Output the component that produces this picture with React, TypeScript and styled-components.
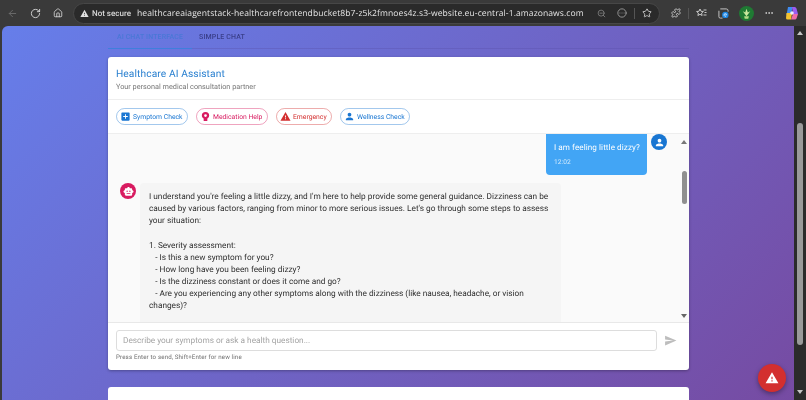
import React from "react";
import styled, { createGlobalStyle } from "styled-components";
import { ArrowLeft, RotateCw, Home, ZoomOut, Star, Puzzle, Ellipsis, CircleEllipsis } from "lucide-react";

const Global = createGlobalStyle`
  html, body { margin: 0; padding: 0; background: #3b3b3b; overflow: hidden; }
  * { box-sizing: border-box; }
  body { font-family: Roboto, "Liberation Sans", sans-serif; text-rendering: geometricPrecision; }
`;
const Shell = styled.div`width: 806px; height: 400px; display: flex; flex-direction: column; overflow: hidden; background: #3a3a3a; filter: blur(0.3px);`;
const Toolbar = styled.header`height: 26px; flex: none; display: flex; align-items: center; padding: 0 0 0 5px; color: #d6d6d6; background: #3a3a3a;`;
const Slot = styled.span<{ $dim?: boolean; $w: number }>`width: ${p => p.$w}px; height: 20px; flex: none; display: flex; align-items: center; justify-content: center; color: ${p => p.$dim ? "#6c6c6c" : "#d8d8d8"};`;
const Address = styled.div`margin: 0 8px; width: 587px; height: 21px; border-radius: 11px; background: #2a2a2a; border: 1px solid #474747; flex: none; display: flex; align-items: center; padding: 0 0 0 6px;`;
const Secure = styled.span`font: 500 8px Roboto, sans-serif; color: #d8d8d8; display: flex; align-items: center; gap: 3px; width: 57px; flex: none; white-space: nowrap;`;
const Url = styled.span`font: 400 8.55px "Open Sans", sans-serif; color: #e4e4e4; white-space: nowrap; flex: 1; letter-spacing: 0.01em;`;
const Sep = styled.span`width: 1px; height: 11px; background: #555; flex: none;`;
const Viewport = styled.div`flex: 1; min-height: 0; display: flex; padding-left: 2px;`;
const Page = styled.main`flex: 1; min-width: 0; overflow: hidden; border-top-left-radius: 6px; background: linear-gradient(135deg, #667eea 0%, #764ba2 100%); display: flex; flex-direction: column; align-items: center; position: relative; padding-left: 1px;`;
const Column = styled.div`width: 581px; flex: none; display: flex; flex-direction: column;`;
const Tabs = styled.nav`height: 23px; flex: none; display: flex; border-bottom: 1px solid rgba(90, 80, 170, .35); margin-bottom: 8px;`;
const Tab = styled.span<{ $active?: boolean }>`width: ${p => p.$active ? 84 : 60}px; display: flex; align-items: center; justify-content: center; padding-bottom: 1px; font: 500 7px Roboto, sans-serif; letter-spacing: .02em; color: ${p => p.$active ? "#4a78d6" : "#3a3f8a"}; margin-bottom: -1px; border-bottom: ${p => p.$active ? "1.5px solid #3f7fdc" : "none"};`;
const Card = styled.section`height: 313px; flex: none; background: #fff; border-radius: 3px; box-shadow: 0 1px 3px rgba(0,0,0,.3); display: flex; flex-direction: column; overflow: hidden;`;
const Header = styled.div`height: 43px; flex: none; padding: 11px 8px 0; border-bottom: 1px solid #eee;`;
const Title = styled.h1`margin: 0; font: 400 10.2px/13px Roboto, sans-serif; letter-spacing: .01em; color: #2a80d0;`;
const Sub = styled.p`margin: 1px 0 0; font: 400 7.3px/9px Roboto, sans-serif; color: #767676;`;
const Chips = styled.div`height: 33px; flex: none; display: flex; align-items: center; gap: 8px; padding: 0 8px;`;
const Chip = styled.span<{ $c: string; $w: number }>`width: ${p => p.$w}px; height: 17px; flex: none; border-radius: 9px; border: 1px solid ${p => p.$c}66; color: ${p => p.$c}; display: flex; align-items: center; gap: 2px; padding-left: 3px; font: 400 6.8px Roboto, sans-serif; white-space: nowrap;`;
const Messages = styled.div`height: 190px; flex: none; background: #fafafa; border-top: 1px solid #eee; border-bottom: 1px solid #e8e8e8; display: flex; overflow: hidden;`;
const MsgList = styled.div`flex: 1; min-width: 0; display: flex; flex-direction: column; padding-right: 12px;`;
const UserRow = styled.div`display: flex; justify-content: flex-end; gap: 4px; flex: none;`;
const UserBubble = styled.div`width: 101px; height: 41px; background: #42a5f5; color: #fff; border-radius: 0 0 4px 4px; padding: 7px 8px 0 8px; font: 400 8.1px/12px Roboto, sans-serif; letter-spacing: .01em; white-space: nowrap;`;
const Time = styled.div`font: 400 6.6px/8px Roboto, sans-serif; margin-top: 5px; opacity: .75;`;
const Avatar = styled.span<{ $bg: string }>`width: 16px; height: 16px; flex: none; border-radius: 50%; background: ${p => p.$bg}; display: flex; align-items: center; justify-content: center;`;
const BotRow = styled.div`display: flex; gap: 4px; margin: 8px 0 0 12px;`;
const BotBubble = styled.div`width: 421px; height: 160px; flex: none; background: #f5f5f5; border-radius: 4px 4px 0 0; padding: 8px 9px 0; font: 400 8.27px/12.15px Roboto, sans-serif; color: #2e2e2e; white-space: pre-wrap;`;
const InnerBar = styled.div`width: 10px; flex: none; display: flex; flex-direction: column; align-items: center; padding: 6px 0 4px;`;
const Arrow = styled.span<{ $down?: boolean; $c: string }>`width: 0; height: 0; flex: none; border-left: 3.5px solid transparent; border-right: 3.5px solid transparent; ${p => p.$down ? `border-top: 4px solid ${p.$c}; margin-top: auto;` : `border-bottom: 4px solid ${p.$c};`}`;
const InnerThumb = styled.span`width: 5px; height: 33px; flex: none; margin-top: 27px; border-radius: 3px; background: #8f8f8f;`;
const InputArea = styled.div`flex: 1; padding: 7px 8px 0; display: flex; flex-direction: column;`;
const InputRow = styled.div`display: flex; align-items: center; gap: 7px;`;
const Field = styled.div`width: 541px; height: 21px; border: 1px solid #ddd; border-radius: 3px; padding-left: 6px; display: flex; align-items: center; font: 400 8.25px Roboto, sans-serif; color: #a4a4a4;`;
const Hint = styled.div`font: 400 6.2px/8px Roboto, sans-serif; margin-top: 2px; color: #707070; letter-spacing: .02em;`;
const NextCard = styled.section`height: 60px; flex: none; margin-top: 17px; background: #fff; border-radius: 3px;`;
const Fab = styled.button`position: absolute; right: 8px; bottom: 8px; width: 28px; height: 28px; border: 0; padding: 0; border-radius: 50%; background: #d32f2f; box-shadow: 0 2px 5px rgba(0,0,0,.35); display: flex; align-items: center; justify-content: center;`;
const Scrollbar = styled.aside`width: 12px; flex: none; background: #2b2b2b; display: flex; flex-direction: column; align-items: center; padding: 5px 0 6px;`;
const PageThumb = styled.span`width: 6.5px; height: 222px; flex: none; margin-top: 88px; background: #9a9a9a; border-radius: 4px;`;

const SolidIcon = ({ d, c, s = 10 }: { d: string; c: string; s?: number }) => (
  <svg width={s} height={s} viewBox="0 0 24 24" fill={c} style={{ flex: "none" }}><path d={d} /></svg>
);
const I = {
  plus: "M19 3H5c-1.1 0-2 .9-2 2v14c0 1.1.9 2 2 2h14c1.1 0 2-.9 2-2V5c0-1.1-.9-2-2-2m-2 10h-4v4h-2v-4H7v-2h4V7h2v4h4z",
  head: "M12 2a8 8 0 0 0-8 8c0 3 1.6 5.2 4 6.500V22h8v-5.500c2.400-1.300 4-3.500 4-6.500a8 8 0 0 0-8-8m0 11a3 3 0 1 1 0-6 3 3 0 0 1 0 6",
  warn: "M1 21h22L12 2zm12-3h-2v-2h2zm0-4h-2v-4h2z",
  person: "M12 12c2.210 0 4-1.790 4-4s-1.790-4-4-4-4 1.790-4 4 1.790 4 4 4m0 2c-2.670 0-8 1.340-8 4v2h16v-2c0-2.660-5.330-4-8-4",
  robot: "M20 9V7c0-1.100-.9-2-2-2h-3c0-1.660-1.340-3-3-3S9 3.340 9 5H6c-1.100 0-2 .9-2 2v2c-1.660 0-3 1.340-3 3s1.340 3 3 3v4c0 1.100.9 2 2 2h12c1.100 0 2-.9 2-2v-4c1.660 0 3-1.340 3-3s-1.340-3-3-3M7.500 11.500C7.500 10.670 8.170 10 9 10s1.500.67 1.500 1.500S9.830 13 9 13s-1.500-.67-1.500-1.500M16 17H8v-2h8zm-1-4c-.83 0-1.500-.67-1.500-1.500S14.170 10 15 10s1.500.67 1.500 1.500S15.830 13 15 13",
  send: "M2.010 21 23 12 2.010 3 2 10l15 2-15 2z",
};

const reply = `I understand you're feeling a little dizzy, and I'm here to help provide some general guidance. Dizziness can be caused by various factors, ranging from minor to more serious issues. Let's go through some steps to assess your situation:

1. Severity assessment:
   - Is this a new symptom for you?
   - How long have you been feeling dizzy?
   - Is the dizziness constant or does it come and go?
   - Are you experiencing any other symptoms along with the dizziness (like nausea, headache, or vision changes)?`;

const chips = [
  { label: "Symptom Check", c: "#1976d2", w: 72, d: I.plus },
  { label: "Medication Help", c: "#d81b60", w: 72, d: I.head },
  { label: "Emergency", c: "#d32f2f", w: 56, d: I.warn },
  { label: "Wellness Check", c: "#1976d2", w: 70, d: I.person },
];

export default function App() {
  return (
    <Shell>
      <Global />
      <Toolbar>
        <Slot $dim $w={14}><ArrowLeft size={11} /></Slot>
        <Slot $w={32}><RotateCw size={11} /></Slot>
        <Slot $w={14}><Home size={10} /></Slot>
        <Address>
          <Secure><SolidIcon d={I.warn} c="#e0e0e0" s={9} />Not secure</Secure>
          <Url>healthcareaiagentstack-healthcarefrontendbucket8b7-z5k2fmnoes4z.s3-website.eu-central-1.amazonaws.com</Url>
          <Slot $dim $w={18}><ZoomOut size={9} color="#8a8a8a" /></Slot>
          <Slot $w={24}><CircleEllipsis size={10} color="#a5a5a5" /></Slot>
          <Sep />
          <Slot $w={24}><Star size={10} /></Slot>
        </Address>
        <Slot $w={16}><Puzzle size={10} /></Slot>
        <Slot $w={8}><Sep /></Slot>
        <Slot $w={18}>
          <svg width="11" height="10" viewBox="0 0 22 20" fill="none" stroke="#d8d8d8" strokeWidth="1.800"><path d="M8 2l2 4.500 4.800.5-3.600 3.200 1 4.800L8 12.600 3.800 15l1-4.800L1.200 7 6 6.500z" /><path d="M15 4h6M17 9h4M15 14h6" /></svg>
        </Slot>
        <Slot $w={26}>
          <svg width="11" height="11" viewBox="0 0 12 12"><path d="M2.500 1H9a2 2 0 0 1 2 2v1M1 3v6.500A1.500 1.500 0 0 0 2.500 11H5" fill="none" stroke="#cfcfcf" /><circle cx="8" cy="7.500" r="3.500" fill="#1e88e5" /><path d="M6.500 7.500h3M9.500 7.500a1.500 1.500 0 1 0-.6 1.300" fill="none" stroke="#cfe8ff" strokeWidth=".8" /></svg>
        </Slot>
        <Slot $w={20}>
          <svg width="15" height="15" viewBox="0 0 16 16"><circle cx="8" cy="8" r="8" fill="#1f7a33" /><path d="M8 11 4 5.500 6.600 7 8 3 9.400 7 12 5.500z" fill="#cdeaa0" /><path d="M5.500 11h5l-.6 2.500H6.100z" fill="#b7dd88" /></svg>
        </Slot>
        <Slot $w={26}><Ellipsis size={10} /></Slot>
        <Slot $w={20}>
          <svg width="14" height="14" viewBox="0 0 14 14"><path d="M3 1h4.500L6 9H1.500z" fill="#3f8cf0" /><path d="M7 1h2.500a2 2 0 0 1 2 1.500L13 8H8z" fill="#9a5cf0" /><path d="M8 8h5l-1.500 4.500a1.500 1.500 0 0 1-1.500 1H6z" fill="#f06ca8" /><path d="M1.500 7H7L6 13.500H2.500A1.500 1.500 0 0 1 1 12z" fill="#f2c230" /><circle cx="7" cy="7" r="1.800" fill="#eef" /></svg>
        </Slot>
      </Toolbar>
      <Viewport>
        <Page>
          <Column>
            <Tabs>
              <Tab $active>AI CHAT INTERFACE</Tab>
              <Tab>SIMPLE CHAT</Tab>
            </Tabs>
            <Card>
              <Header>
                <Title>Healthcare AI Assistant</Title>
                <Sub>Your personal medical consultation partner</Sub>
              </Header>
              <Chips>
                {chips.map(x => (
                  <Chip key={x.label} $c={x.c} $w={x.w}>
                    <SolidIcon d={x.d} c={x.c} s={11} />
                    {x.label}
                  </Chip>
                ))}
              </Chips>
              <Messages>
                <MsgList>
                  <UserRow>
                    <UserBubble>
                      I am feeling little dizzy?
                      <Time>12:02</Time>
                    </UserBubble>
                    <Avatar $bg="#1976d2"><SolidIcon d={I.person} c="#fff" s={11} /></Avatar>
                  </UserRow>
                  <BotRow>
                    <Avatar $bg="#d81b60"><SolidIcon d={I.robot} c="#fff" s={11} /></Avatar>
                    <BotBubble>{reply}</BotBubble>
                  </BotRow>
                </MsgList>
                <InnerBar>
                  <Arrow $c="#777" />
                  <InnerThumb />
                  <Arrow $down $c="#666" />
                </InnerBar>
              </Messages>
              <InputArea>
                <InputRow>
                  <Field>Describe your symptoms or ask a health question...</Field>
                  <SolidIcon d={I.send} c="#bdbdbd" s={13} />
                </InputRow>
                <Hint>Press Enter to send, Shift+Enter for new line</Hint>
              </InputArea>
            </Card>
            <NextCard />
          </Column>
          <Fab aria-label="Emergency"><SolidIcon d={I.warn} c="#fff" s={14} /></Fab>
        </Page>
        <Scrollbar>
          <Arrow $c="#c4c4c4" />
          <PageThumb />
          <Arrow $down $c="#c4c4c4" />
        </Scrollbar>
      </Viewport>
    </Shell>
  );
}
